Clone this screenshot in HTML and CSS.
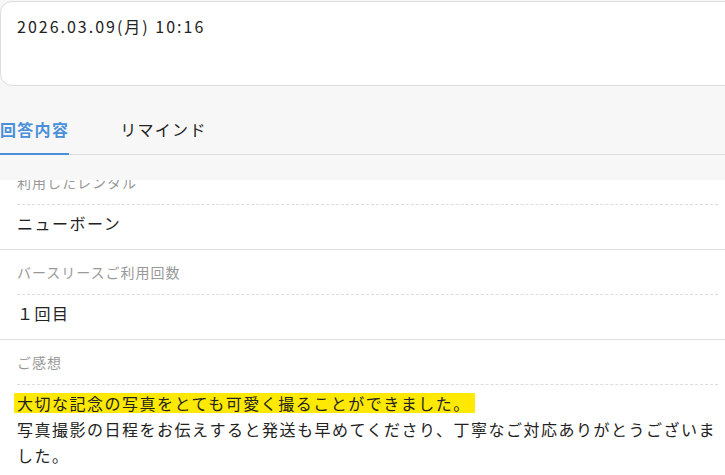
FILE: index.html
```html
<!DOCTYPE html>
<html lang="ja">
<head>
<meta charset="utf-8">
<title>回答内容</title>
<link rel="stylesheet" href="styles.css">
</head>
<body>
<div class="page">
  <div class="date-card">
    <div class="date">2026.03.09(月) 10:16</div>
  </div>

  <nav class="tabs">
    <div class="tab tab-active">回答内容</div>
    <div class="tab">リマインド</div>
  </nav>

  <section class="sheet">
    <div class="field field-first">
      <div class="label">利用したレンタル</div>
      <div class="value">ニューボーン</div>
    </div>
    <div class="field">
      <div class="label">バースリースご利用回数</div>
      <div class="value">１回目</div>
    </div>
    <div class="field">
      <div class="label">ご感想</div>
      <div class="value"><span class="marker">大切な記念の写真をとても可愛く撮ることができました。</span><br>写真撮影の日程をお伝えすると発送も早めてくださり、丁寧なご対応ありがとうございま<br>した。</div>
    </div>
  </section>
</div>
</body>
</html>
```

FILE: styles.css
```css
html, body {
  margin: 0;
  padding: 0;
  overflow: hidden;
  background: #f7f7f7;
}

body {
  font-family: "Noto Sans CJK JP", "Noto Sans", sans-serif;
  color: #222;
}

.page {
  width: 735px;
  padding-top: 1px;
}

.date-card {
  box-sizing: border-box;
  width: 760px;
  height: 85px;
  background: #fff;
  border: 1px solid #ddd;
  border-radius: 12px 0 0 12px;
  padding: 12px 16px;
}

.date {
  font-size: 16px;
  line-height: 24px;
  letter-spacing: 2px;
}

.tabs {
  display: flex;
  gap: 51px;
  padding-top: 31px;
  border-bottom: 1px solid #ddd;
  margin-bottom: 25px;
}

.tab {
  font-size: 16px;
  line-height: 24px;
  letter-spacing: 1.3px;
  padding-bottom: 12px;
  border-bottom: 2px solid transparent;
  margin-bottom: -1px;
}

.tab-active {
  color: #4a90d9;
  font-weight: bold;
  border-bottom-color: #4a90d9;
}

.sheet {
  background: #fff;
  overflow: hidden;
}

.field {
  padding: 0 17px;
  border-bottom: 1px solid #ddd;
}

.field-first {
  margin-top: -20px;
}

.label {
  font-size: 14px;
  line-height: 22px;
  letter-spacing: 1px;
  color: #999;
  padding: 11px 0;
  border-bottom: 1px dashed #ddd;
}

.value {
  font-size: 16px;
  line-height: 26px;
  letter-spacing: 1.5px;
  padding: 5px 0 13px;
}

.marker {
  background: linear-gradient(transparent 10%, #ffe900 10%, #ffe900 92%, transparent 92%);
  border-radius: 4px;
  padding: 0 4px 0 3px;
  margin-left: -3px;
  margin-right: -4px;
}
```
